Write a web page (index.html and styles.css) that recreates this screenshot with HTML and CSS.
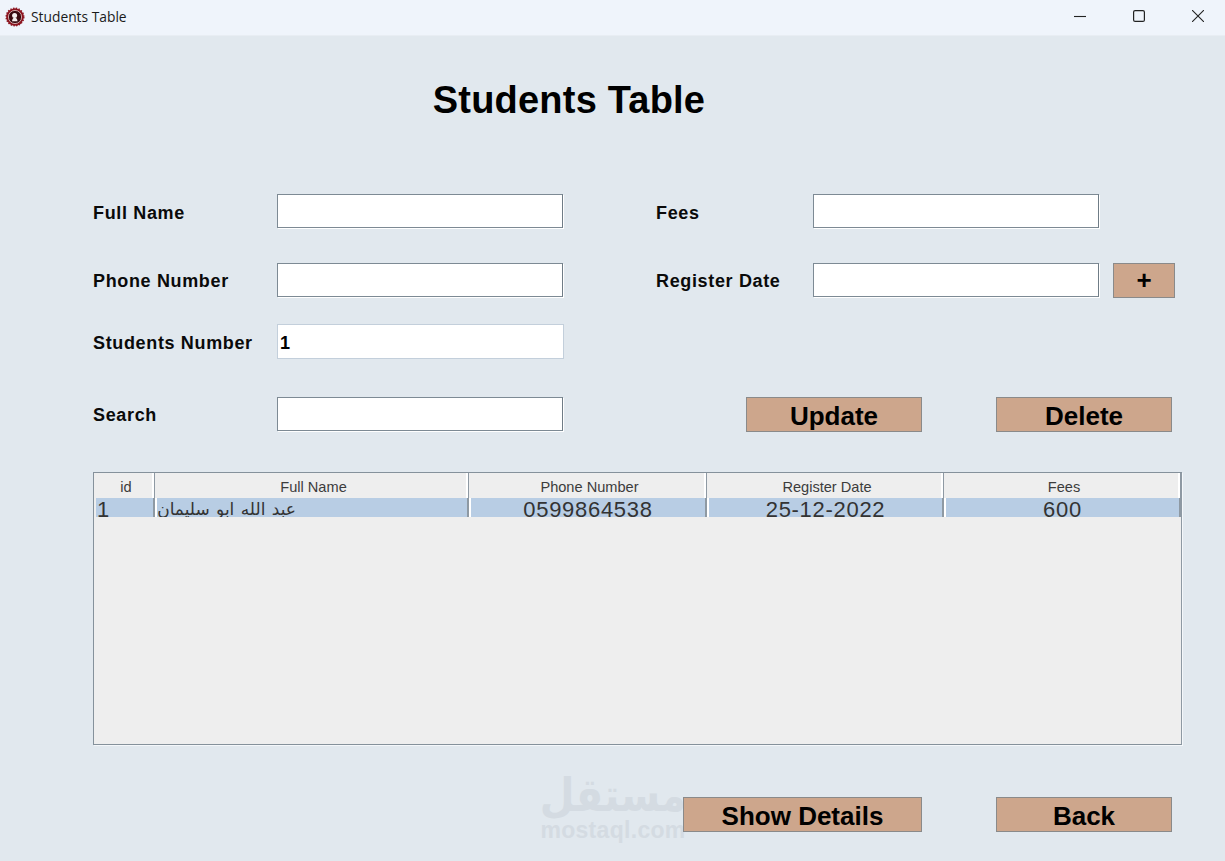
FILE: index.html
```html
<!DOCTYPE html>
<html lang="en">
<head>
<meta charset="utf-8">
<title>Students Table</title>
<link rel="stylesheet" href="styles.css">
</head>
<body>
<div class="window">
  <header class="titlebar">
    <svg class="app-icon" viewBox="0 0 20 20" width="20" height="20">
      <circle cx="10" cy="10" r="8.8" fill="#8c1520" stroke="#8c1520" stroke-width="1.4" stroke-dasharray="1.4 1.4"/>
      <circle cx="10" cy="10" r="6.6" fill="#3a0a10" stroke="#e8c9c9" stroke-width="0.8"/>
      <circle cx="9.6" cy="8.4" r="2.5" fill="#f4eeee"/>
      <path d="M7 14.2c.3-2.4 1.4-3.6 2.7-3.6s2.5 1.2 2.8 3.6z" fill="#f4eeee"/>
    </svg>
    <span class="window-title">Students Table</span>
    <div class="window-controls">
      <svg class="control" viewBox="0 0 12 12" width="12" height="12"><path d="M0 6.5h12" stroke="#222" stroke-width="1.1" fill="none"/></svg>
      <svg class="control" viewBox="0 0 12 12" width="12" height="12"><rect x="0.6" y="0.6" width="10.8" height="10.8" rx="1.5" stroke="#222" stroke-width="1.2" fill="none"/></svg>
      <svg class="control" viewBox="0 0 12 12" width="12" height="12"><path d="M0 0l12 12M12 0L0 12" stroke="#222" stroke-width="1.1" fill="none"/></svg>
    </div>
  </header>

  <main class="content">
    <h1 class="page-title">Students Table</h1>

    <div class="form-row row-1">
      <label class="label label-left">Full Name</label>
      <input class="field" type="text">
      <label class="label label-right">Fees</label>
      <input class="field" type="text">
    </div>
    <div class="form-row row-2">
      <label class="label label-left">Phone Number</label>
      <input class="field" type="text">
      <label class="label label-right">Register Date</label>
      <input class="field" type="text">
      <button class="btn btn-plus" type="button">+</button>
    </div>
    <div class="form-row row-3">
      <label class="label label-left">Students Number</label>
      <input class="field field-readonly" type="text" value="1" readonly>
    </div>
    <div class="form-row row-4">
      <label class="label label-left">Search</label>
      <input class="field" type="text">
      <button class="btn btn-update" type="button">Update</button>
      <button class="btn btn-delete" type="button">Delete</button>
    </div>

    <div class="table-wrap">
      <div class="table-head">
        <div class="th th-id">id</div>
        <div class="th">Full Name</div>
        <div class="th">Phone Number</div>
        <div class="th">Register Date</div>
        <div class="th">Fees</div>
      </div>
      <div class="table-row">
        <div class="td td-id">1</div>
        <div class="td td-name" dir="rtl">عبد الله ابو سليمان</div>
        <div class="td">0599864538</div>
        <div class="td">25-12-2022</div>
        <div class="td">600</div>
      </div>
    </div>

    <div class="footer-row">
      <div class="watermark">
        <span class="wm-ar" dir="rtl">مستقل</span>
        <span class="wm-en">mostaql.com</span>
      </div>
      <button class="btn btn-details" type="button">Show Details</button>
      <button class="btn btn-back" type="button">Back</button>
    </div>
  </main>
</div>
</body>
</html>
```

FILE: styles.css
```css
* { box-sizing: border-box; }
html, body { margin: 0; padding: 0; }
body {
  width: 1225px;
  height: 861px;
  overflow: hidden;
  background: #e1e8ee;
  font-family: "Liberation Sans", Arial, sans-serif;
}
.window { display: flex; flex-direction: column; height: 861px; }

.titlebar {
  height: 36px;
  flex: none;
  display: flex;
  align-items: center;
  padding-left: 5px;
  background: #eff4fb;
  border-bottom: 1px solid #e8edf3;
}
.app-icon { flex: none; margin-top: -2px; }
.window-title {
  margin-left: 6px;
  margin-top: -2px;
  font-family: "Open Sans", "Noto Sans", sans-serif;
  font-size: 13.8px;
  color: #1a1a1a;
}
.window-controls { margin-left: auto; display: flex; gap: 47px; padding-right: 21px; margin-top: -4px; }
.control { display: block; }

.content { padding-left: 93px; flex: 1; }
.page-title {
  margin: 42px 0 0;
  width: 952px;
  text-align: center;
  font-size: 38px;
  line-height: 44px;
  font-weight: 700;
  letter-spacing: 0.2px;
  color: #000;
}

.form-row { display: flex; align-items: flex-start; height: 35px; }
.row-1 { margin-top: 72px; height: 34px; }
.row-2 { margin-top: 35px; }
.row-3 { margin-top: 26px; }
.row-4 { margin-top: 38px; }

.label {
  flex: none;
  font-size: 18px;
  font-weight: 700;
  line-height: 37px;
  letter-spacing: 0.65px;
  color: #0a0a0a;
}
.row-1 .label, .row-3 .label { line-height: 39px; }
.label-left { width: 184px; }
.label-right { width: 157px; margin-left: 93px; }

.field {
  flex: none;
  width: 286px;
  height: 34px;
  padding: 0 2px;
  background: #fff;
  border: 1px solid #7d8a94;
  border-right-color: #6f7c86;
  box-shadow: 1px 1px 0 #fff;
  outline: none;
  font-family: "Liberation Sans", Arial, sans-serif;
  font-size: 18px;
  font-weight: 700;
  color: #000;
  border-radius: 0;
}
.field-readonly { width: 287px; height: 35px; padding-top: 4px; border-color: #c3cfdb; box-shadow: none; }

.btn {
  flex: none;
  display: block;
  height: 35px;
  padding: 0;
  background: #cda68c;
  border: 1px solid #8a8a8a;
  border-radius: 0;
  font-family: "Liberation Sans", Arial, sans-serif;
  font-size: 26px;
  font-weight: 700;
  line-height: 37px;
  color: #000;
  text-align: center;
}
.btn-plus { width: 62px; margin-left: 14px; line-height: 33px; }
.btn-update { width: 176px; margin-left: 183px; }
.btn-delete { width: 176px; margin-left: 74px; }

.table-wrap {
  margin-top: 40px;
  width: 1089px;
  height: 273px;
  background: #eeeeee;
  border: 1px solid #85919b;
  border-right-color: #8e99a3;
  box-shadow: 1px 1px 0 #f4f7fa;
}
.table-head, .table-row {
  display: grid;
  grid-template-columns: 61px 314px 238px 237px 237px;
}
.table-head { height: 25px; border-bottom: 1px solid #85919b; width: 1087px; }
.th {
  padding-left: 4px;
  border-right: 1px solid #8e99a3;
  box-shadow: inset -2px 0 0 #fff;
  text-align: center;
  font-size: 14.6px;
  line-height: 28px;
  color: #3c3c3c;
  background: #eeeeee;
}
.table-row { height: 19px; width: 1087px; overflow: hidden; }
.td {
  background: #b8cde4;
  border-right: 2px solid #8e99a3;
  border-left: 2px solid #fff;
  text-align: center;
  font-size: 22px;
  line-height: 24px;
  letter-spacing: 0.7px;
  color: #333;
  white-space: nowrap;
}
.td-id { text-align: left; padding-left: 1px; border-left-color: #eeeeee; }
.td-name {
  text-align: right;
  padding-right: 171px;
  font-family: "DejaVu Sans", sans-serif;
  font-size: 17px;
  line-height: 22px;
  letter-spacing: 0;
  word-spacing: 1px;
}

.footer-row { position: relative; display: flex; margin-top: 52px; }
.watermark {
  position: absolute;
  left: 445px;
  top: -29px;
  width: 150px;
  text-align: center;
  color: #d4dbe2;
}
.wm-ar {
  display: block;
  font-family: "DejaVu Sans", sans-serif;
  font-size: 40px;
  line-height: 54px;
  font-weight: 700;
  white-space: nowrap;
  transform: scaleY(1.15);
}
.wm-en { display: block; font-size: 23px; line-height: 24px; font-weight: 700; letter-spacing: 0.3px; margin-top: -4px; white-space: nowrap; }
.btn-details { position: relative; width: 239px; margin-left: 590px; }
.btn-back { width: 176px; margin-left: 74px; }
```
